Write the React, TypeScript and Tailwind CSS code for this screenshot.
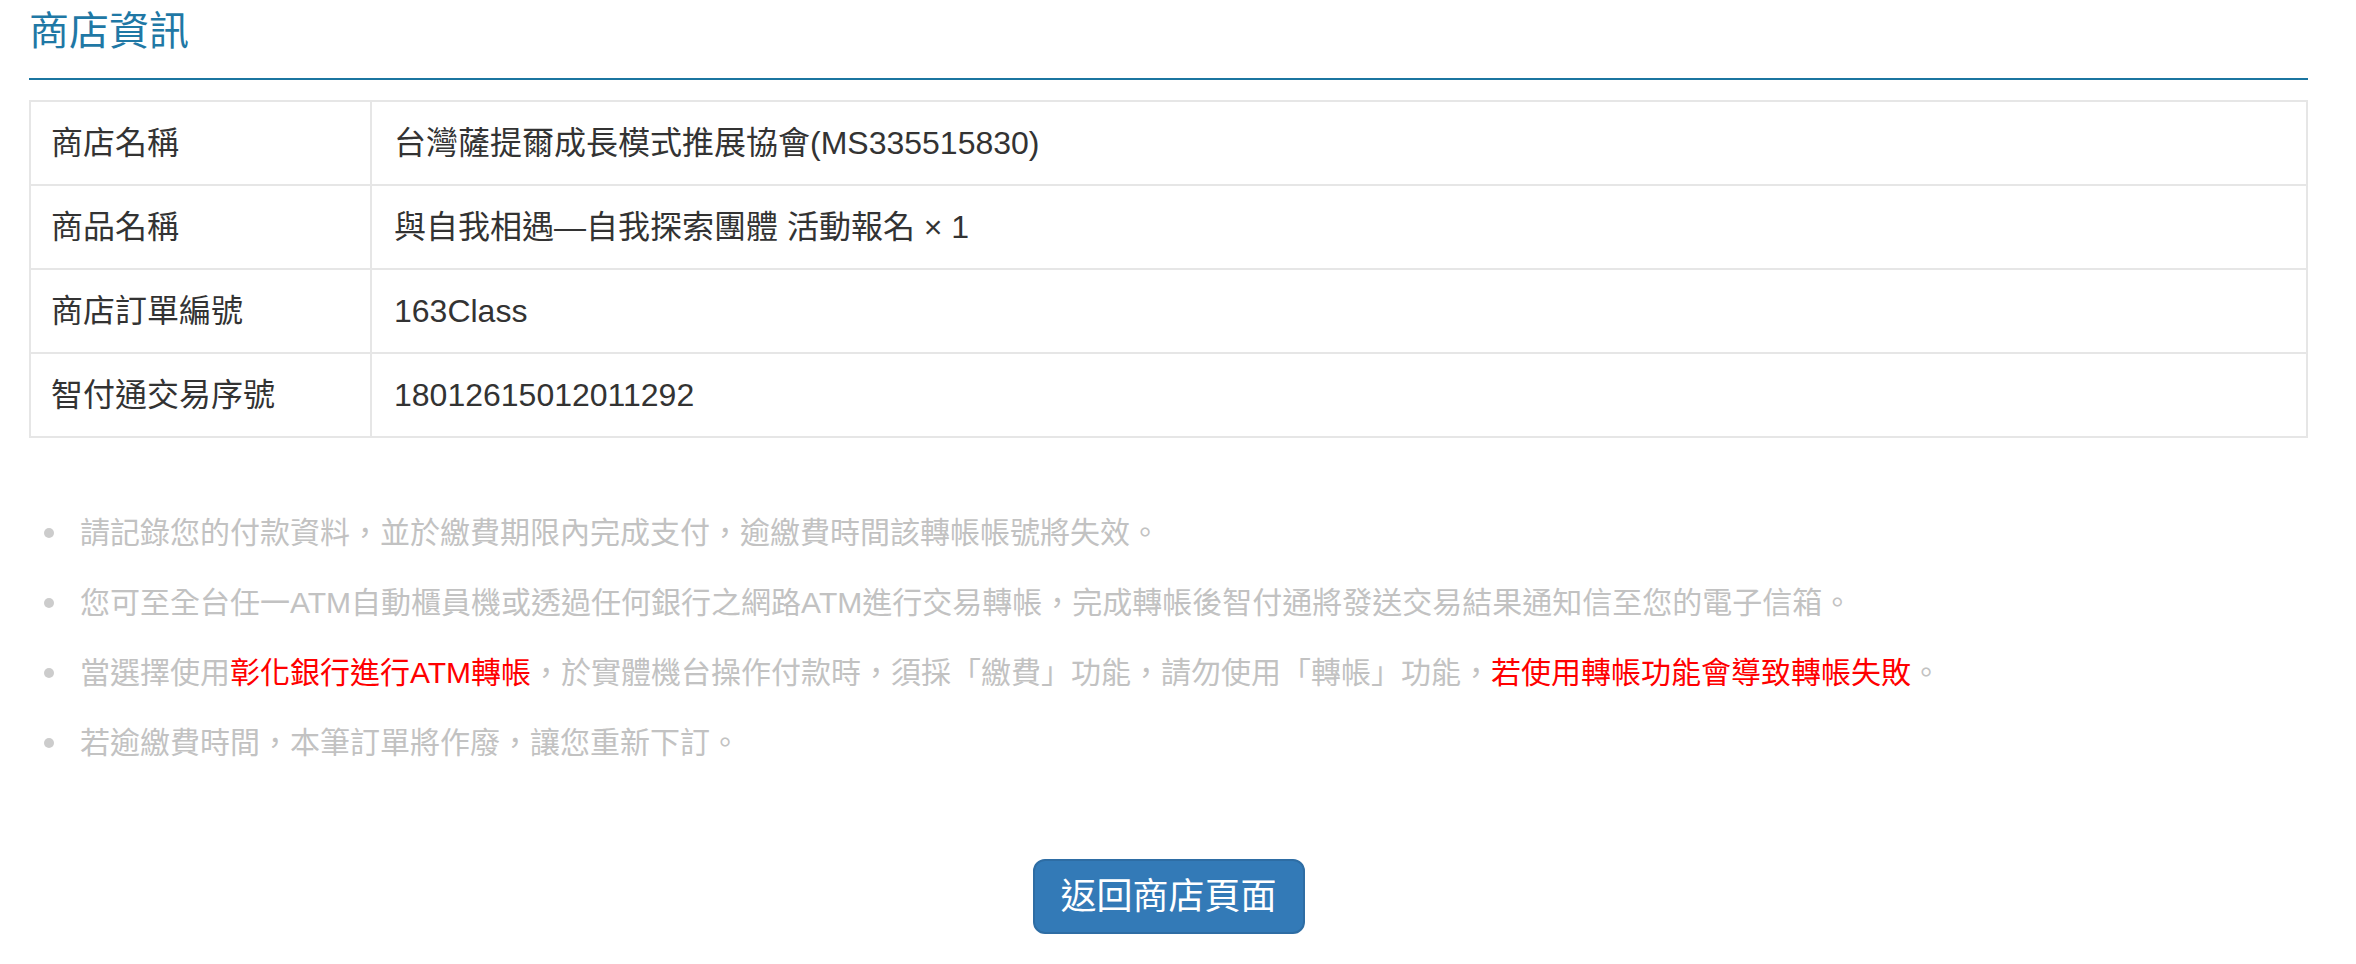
const rows = [
  { label: '商店名稱', value: '台灣薩提爾成長模式推展協會(MS335515830)' },
  { label: '商品名稱', value: '與自我相遇—自我探索團體 活動報名 × 1' },
  { label: '商店訂單編號', value: '163Class' },
  { label: '智付通交易序號', value: '18012615012011292' },
]

function Bullet({ children }: { children: React.ReactNode }) {
  return (
    <li className="mb-[28px] flex items-center leading-[42px]">
      <span className="mr-[26px] inline-block h-[10px] w-[10px] shrink-0 rounded-full bg-[#cccccc]" />
      <span>{children}</span>
    </li>
  )
}

export default function App() {
  return (
    <div className="min-h-screen bg-white font-['Liberation_Sans','Noto_Sans_CJK_TC',sans-serif]">
      <div className="ml-[29px] w-[2279px]">
        <h2 className="mt-[7px] border-b-2 border-[#1b75a0] pb-[23px] text-[40px] font-normal leading-[48px] text-[#1f78a5]">
          商店資訊
        </h2>

        <div className="mt-[20px] border-2 border-[#e6e6e6] text-[32px] text-[#333333]">
          {rows.map((row, i) => (
            <div
              key={row.label}
              className={
                i < rows.length - 1
                  ? 'flex h-[84px] border-b-2 border-[#e6e6e6]'
                  : 'flex h-[82px]'
              }
            >
              <div className="flex w-[341px] items-center border-r-2 border-[#e6e6e6] pl-[20px]">
                {row.label}
              </div>
              <div className="flex flex-1 items-center pl-[22px]">{row.value}</div>
            </div>
          ))}
        </div>

        <ul className="mt-[74px] pl-[15px] text-[30px] text-[#c2c2c2]">
          <Bullet>請記錄您的付款資料，並於繳費期限內完成支付，逾繳費時間該轉帳帳號將失效。</Bullet>
          <Bullet>
            您可至全台任一ATM自動櫃員機或透過任何銀行之網路ATM進行交易轉帳，完成轉帳後智付通將發送交易結果通知信至您的電子信箱。
          </Bullet>
          <Bullet>
            當選擇使用<span className="text-[#ff0000]">彰化銀行進行ATM轉帳</span>
            ，於實體機台操作付款時，須採「繳費」功能，請勿使用「轉帳」功能，
            <span className="text-[#ff0000]">若使用轉帳功能會導致轉帳失敗</span>。
          </Bullet>
          <Bullet>若逾繳費時間，本筆訂單將作廢，讓您重新下訂。</Bullet>
        </ul>

        <div className="mt-[95px] flex justify-center">
          <button
            type="button"
            className="h-[75px] w-[272px] rounded-[12px] border-2 border-[#2e6da4] bg-[#337ab7] text-[36px] text-white"
          >
            返回商店頁面
          </button>
        </div>
      </div>
    </div>
  )
}
